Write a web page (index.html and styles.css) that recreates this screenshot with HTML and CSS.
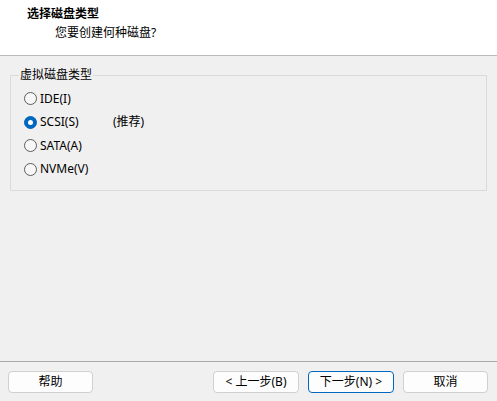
FILE: index.html
```html
<!DOCTYPE html>
<html lang="zh-CN">
<head>
<meta charset="utf-8">
<title>新建虚拟机向导</title>
<link rel="stylesheet" href="styles.css">
</head>
<body>
<div class="window">
  <header class="header">
    <div class="title">选择磁盘类型</div>
    <div class="subtitle">您要创建何种磁盘?</div>
  </header>
  <main class="content">
    <fieldset class="group">
      <legend class="legend">虚拟磁盘类型</legend>
      <div class="row"><span class="radio"></span><span class="label">IDE(I)</span></div>
      <div class="row"><span class="radio checked"></span><span class="label fixed">SCSI(S)</span><span class="note">(推荐)</span></div>
      <div class="row"><span class="radio"></span><span class="label">SATA(A)</span></div>
      <div class="row"><span class="radio"></span><span class="label">NVMe(V)</span></div>
    </fieldset>
  </main>
  <footer class="footer">
    <button class="btn btn-help">帮助</button>
    <div class="btn-group">
      <button class="btn">&lt; 上一步(B)</button>
      <button class="btn primary">下一步(N) &gt;</button>
      <button class="btn btn-cancel">取消</button>
    </div>
  </footer>
</div>
</body>
</html>
```
FILE: styles.css
```css
* { box-sizing: border-box; }
html, body {
  margin: 0;
  padding: 0;
  background: #f0f0f0;
}
body {
  font-family: "Noto Sans", "Noto Sans CJK SC", sans-serif;
  font-size: 12px;
  color: #000;
}
.window {
  width: 497px;
  height: 401px;
  display: flex;
  flex-direction: column;
  overflow: hidden;
}
.header {
  height: 56px;
  background: #fff;
  border-bottom: 1px solid #b9b9b9;
  padding-top: 5px;
  flex: none;
}
.title {
  font-weight: bold;
  padding-left: 27px;
  line-height: 17px;
}
.subtitle {
  padding-left: 55px;
  line-height: 17px;
  margin-top: 2px;
}
.content {
  flex: 1;
  padding: 11px 10px 0 10px;
}
.group {
  margin: 0;
  border: 1px solid #dadada;
  padding: 4px 0 9px 13px;
  min-width: 0;
}
.legend {
  margin-left: -5px;
  padding: 0 1px;
  line-height: 16px;
}
.row {
  height: 23.5px;
  display: flex;
  align-items: center;
  line-height: 16px;
}
.radio {
  width: 13px;
  height: 13px;
  border: 1px solid #5c5c5c;
  border-radius: 50%;
  background: #f7f7f7;
  margin-right: 3px;
  flex: none;
  display: flex;
  align-items: center;
  justify-content: center;
}
.radio.checked {
  background: #0067c0;
  border-color: #0067c0;
}
.radio.checked::after {
  content: "";
  width: 5px;
  height: 5px;
  border-radius: 50%;
  background: #fff;
}
.label.fixed {
  display: inline-block;
  width: 73px;
}
.footer {
  flex: none;
  height: 40px;
  border-top: 1px solid #a9a9a9;
  padding: 9px 9px 0 8px;
  display: flex;
  justify-content: space-between;
  align-items: flex-start;
}
.btn-group {
  display: flex;
  gap: 9px;
}
.btn {
  font-family: inherit;
  font-size: 12px;
  width: 86px;
  height: 22px;
  padding: 0;
  background: #fdfdfd;
  border: 1px solid #d0d0d0;
  border-radius: 4px;
  color: #000;
  line-height: 18px;
}
.btn-help { width: 85px; }
.btn-cancel { width: 85px; }
.btn.primary {
  border-color: #0067c0;
}
```
